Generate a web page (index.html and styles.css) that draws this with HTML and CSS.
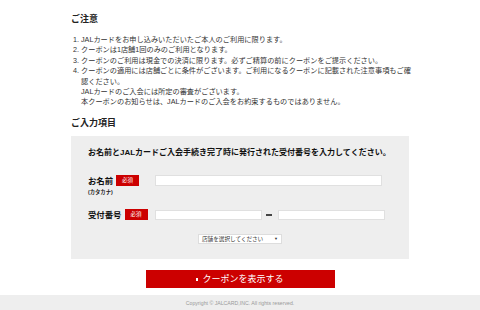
FILE: index.html
```html
<!DOCTYPE html>
<html lang="ja">
  <head>
    <meta charset="utf-8">
    <title>クーポン表示</title>
    <link rel="stylesheet" href="styles.css">
  </head>
  <body>
    <div class="main">
      <h2 class="ttl">ご注意</h2>
      <ol class="notes">
        <li>JALカードをお申し込みいただいたご本人のご利用に限ります。</li>
        <li>クーポンは1店舗1回のみのご利用となります。</li>
        <li>クーポンのご利用は現金での決済に限ります。必ずご精算の前にクーポンをご提示ください。</li>
        <li>クーポンの適用には店舗ごとに条件がございます。ご利用になるクーポンに記載された注意事項もご確<br>認ください。<br>
          JALカードのご入会には所定の審査がございます。<br>
          本クーポンのお知らせは、JALカードのご入会をお約束するものではありません。</li>
      </ol>

      <h2 class="ttl ttl-form">ご入力項目</h2>
      <form class="form-box" id="coupon-form">
        <p class="lead">お名前とJALカードご入会手続き完了時に発行された受付番号を入力してください。</p>

        <div class="row">
          <div class="label-cell">
            <div class="lbl"><span>お名前</span><em class="req">必須</em></div>
            <small class="kana">(カタカナ)</small>
          </div>
          <input type="text" class="txt txt-name" name="name">
        </div>

        <div class="row row-num">
          <div class="label-cell">
            <div class="lbl"><span>受付番号</span><em class="req">必須</em></div>
          </div>
          <div class="num-inputs">
            <input type="text" class="txt txt-num" name="num1">
            <span class="dash"></span>
            <input type="text" class="txt txt-num" name="num2">
          </div>
        </div>

        <div class="shop">
          <div class="select">店舗を選択してください<span class="arrow">▼</span></div>
        </div>
      </form>

      <div class="btn-wrap">
        <button class="btn" form="coupon-form">クーポンを表示する</button>
      </div>
    </div>
    <footer class="footer">Copyright &copy; JALCARD,INC. All rights reserved.</footer>
  </body>
</html>
```

FILE: styles.css
```css
body {
  margin: 0;
  background-color: #fff;
  color: #222;
  font-family: "Liberation Sans", "Noto Sans CJK JP", sans-serif;
}
.main {
  width: 338px;
  margin: 0 auto;
  padding-top: 14px;
}
.ttl {
  font-size: 9px;
  line-height: 10px;
  margin: 0 0 11px;
  font-weight: bold;
}
.ttl-form {
  margin: 10px 0 8px;
}
.notes {
  margin: 0;
  padding-left: 10px;
  font-size: 7.2px;
  line-height: 10.4px;
  color: #333;
  white-space: nowrap;
}
.form-box {
  background-color: #eee;
  padding: 12px 17px 15px;
}
.lead {
  margin: 0 0 17px;
  font-size: 8px;
  line-height: 10px;
  font-weight: bold;
  color: #111;
  white-space: nowrap;
}
.row {
  display: flex;
  align-items: flex-start;
}
.label-cell {
  width: 67px;
}
.lbl {
  display: flex;
  align-items: center;
  gap: 3px;
  height: 11px;
  font-size: 8.4px;
  font-weight: bold;
  color: #111;
}
.req {
  display: inline-block;
  width: 23px;
  height: 11px;
  line-height: 11px;
  text-align: center;
  background-color: #c00;
  color: #fff;
  font-style: normal;
  font-size: 5.5px;
  font-weight: normal;
}
.row-num .lbl {
  gap: 3px;
}
.kana {
  display: block;
  margin-top: 3px;
  font-size: 5.3px;
  line-height: 7px;
  font-weight: bold;
}
.txt {
  box-sizing: border-box;
  height: 11px;
  margin: 0;
  padding: 0;
  border: 1px solid #e0e0e0;
  background-color: #fff;
}
.txt-name {
  width: 227px;
}
.row-num {
  margin-top: 13px;
}
.num-inputs {
  display: flex;
  align-items: center;
  padding-top: 1px;
}
.txt-num {
  width: 107px;
  height: 10px;
}
.dash {
  width: 6px;
  height: 2px;
  background-color: #444;
  margin: 0 6px 0 4px;
}
.shop {
  display: flex;
  justify-content: center;
  margin-top: 14px;
}
.select {
  box-sizing: border-box;
  width: 84px;
  height: 10px;
  padding: 0 3px;
  display: flex;
  justify-content: space-between;
  align-items: center;
  background-color: #fff;
  border: 1px solid #ddd;
  font-size: 5.6px;
  color: #333;
}
.arrow {
  font-size: 4px;
}
.btn-wrap {
  display: flex;
  justify-content: center;
  margin-top: 11px;
}
.btn {
  width: 189px;
  height: 18px;
  padding: 0;
  border: none;
  background-color: #c00;
  color: #fff;
  font-family: "Liberation Sans", "Noto Sans CJK JP", sans-serif;
  font-size: 9px;
  cursor: pointer;
}
.btn::before {
  content: "";
  display: inline-block;
  width: 2px;
  height: 3px;
  margin-right: 4px;
  vertical-align: middle;
  background-color: #fff;
}
.footer {
  margin-top: 7px;
  height: 16px;
  line-height: 16px;
  background-color: #eee;
  text-align: center;
  font-size: 5.2px;
  color: #999;
}
```
